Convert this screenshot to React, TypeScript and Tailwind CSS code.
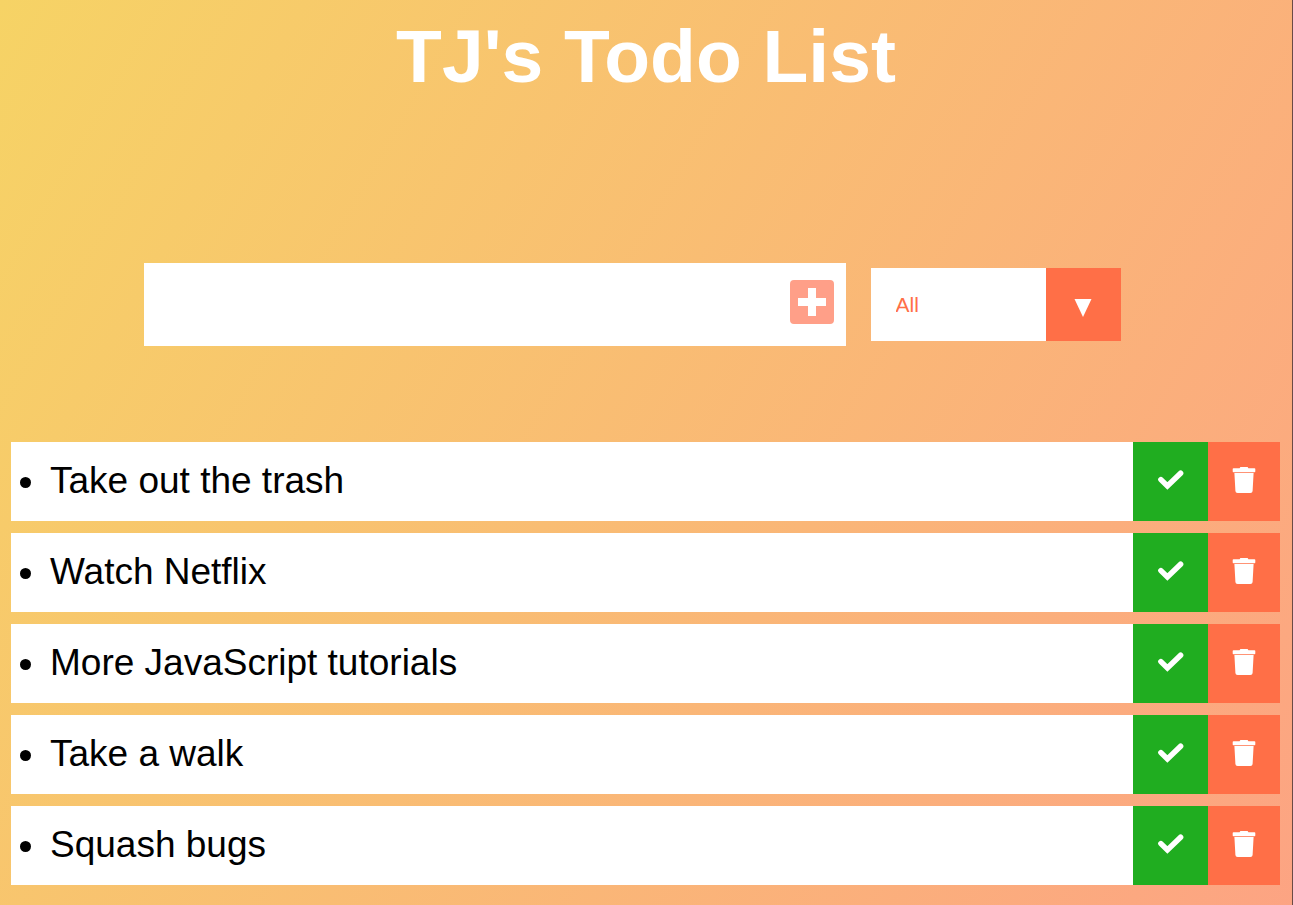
import { useState } from "react";

const initial = [
  "Take out the trash",
  "Watch Netflix",
  "More JavaScript tutorials",
  "Take a walk",
  "Squash bugs",
];

function PlusIcon() {
  return (
    <svg viewBox="0 0 44 44" className="size-11" fill="currentColor" fillRule="evenodd" aria-hidden="true">
      <path d="M4 0h36a4 4 0 0 1 4 4v36a4 4 0 0 1-4 4H4a4 4 0 0 1-4-4V4a4 4 0 0 1 4-4zM18 8v10H8v8h10v10h8V26h10v-8H26V8z" />
    </svg>
  );
}

function CheckIcon() {
  return (
    <svg viewBox="0 0 26 20" className="h-5 w-[26px]" fill="none" stroke="currentColor" aria-hidden="true">
      <path d="M2.9 9.6l6.5 6.4L22.6 3.2" strokeWidth="5.5" strokeLinecap="round" />
    </svg>
  );
}

function TrashIcon() {
  return (
    <svg viewBox="0 0 24 26" className="h-[26px] w-6" fill="currentColor" aria-hidden="true">
      <path d="M8.4 0h7.2l.8 1.3h6.1q.8 0 .8.8V4.5q0 .8-.8.8h-21q-.8 0-.8-.8V2.1q0-.8.8-.8h6.1z" />
      <path d="M2.4 6.1h19.2l-1 17.8A2.2 2.2 0 0 1 18.4 26H5.6a2.2 2.2 0 0 1-2.2-2.1z" />
    </svg>
  );
}

export default function App() {
  const [todos, setTodos] = useState(initial.map((text) => ({ text, done: false })));
  const [draft, setDraft] = useState("");
  const [filter, setFilter] = useState("All");

  const add = () => {
    if (draft.trim()) setTodos([...todos, { text: draft.trim(), done: false }]);
    setDraft("");
  };

  const visible = todos.filter(
    (t) => filter === "All" || (filter === "Completed") === t.done,
  );

  return (
    <div className="min-h-screen border-r border-[#6b4a45] bg-[linear-gradient(120deg,#f6d365_0%,#fda085_108%)] font-['Liberation_Sans',Arial,sans-serif] text-black">
      <header className="flex h-28 items-center justify-center">
        <h1 className="text-[75px] font-bold leading-none text-white">TJ's Todo List</h1>
      </header>

      <form
        className="mt-[151px] flex items-center justify-center gap-[25px] pr-7"
        onSubmit={(e) => {
          e.preventDefault();
          add();
        }}
      >
        <div className="flex h-[83px] w-[702px] bg-white">
          <input
            aria-label="New todo"
            className="min-w-0 flex-1 px-4 text-[37px] outline-none"
            value={draft}
            onChange={(e) => setDraft(e.target.value)}
          />
          <button type="submit" aria-label="Add todo" className="px-3 pb-[5px] text-[#ff9f88]">
            <PlusIcon />
          </button>
        </div>
        <div className="relative flex h-[73px] w-[250px]">
          <select
            aria-label="Filter todos"
            className="w-full appearance-none bg-white px-[25px] text-[21px] text-[#ff6f47] outline-none"
            value={filter}
            onChange={(e) => setFilter(e.target.value)}
          >
            <option>All</option>
            <option>Completed</option>
            <option>Uncompleted</option>
          </select>
          <span className="pointer-events-none absolute inset-y-0 right-0 flex w-[75px] items-center justify-center bg-[#ff6f47] pt-[6px] text-white">
            <svg viewBox="0 0 18 18" className="size-[18px]" fill="currentColor" aria-hidden="true">
              <path d="M.5 0h17L9 18z" />
            </svg>
          </span>
        </div>
      </form>

      <ul className="mt-24 flex flex-col gap-3 pb-[18px] pl-[11px] pr-3">
        {visible.map((todo) => (
          <li key={todo.text} className="flex h-[79px] bg-white">
            <div className="flex min-w-0 flex-1 items-center gap-[19px] pb-px pl-[9px] text-[37px]">
              <span className="mt-[3px] size-[11px] rounded-full bg-black" aria-hidden="true" />
              <span className={todo.done ? "line-through opacity-50" : ""}>{todo.text}</span>
            </div>
            <button
              type="button"
              aria-label={`Complete ${todo.text}`}
              className="flex w-[75px] items-center justify-center bg-[#20ad20] pb-[3px] text-white"
              onClick={() => setTodos(todos.map((t) => (t === todo ? { ...t, done: !t.done } : t)))}
            >
              <CheckIcon />
            </button>
            <button
              type="button"
              aria-label={`Delete ${todo.text}`}
              className="flex w-[72px] items-center justify-center bg-[#ff6f47] pb-[3px] text-white"
              onClick={() => setTodos(todos.filter((t) => t !== todo))}
            >
              <TrashIcon />
            </button>
          </li>
        ))}
      </ul>
    </div>
  );
}
